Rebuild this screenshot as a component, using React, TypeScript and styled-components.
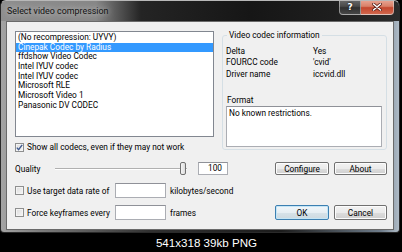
import { Fragment } from "react";
import styled, { createGlobalStyle } from "styled-components";

const GlobalStyle = createGlobalStyle`
    html, body {
        margin: 0;
        padding: 0;
        background: #000;
    }
    body {
        width: 402px;
        height: 252px;
        overflow: hidden;
        font-family: Roboto, "Noto Sans", sans-serif;
        font-size: 8.3px;
        color: #000;
    }
`

const Page = styled.div`
    width: 402px;
    height: 252px;
    display: flex;
    flex-direction: column;
`

const Window = styled.div`
    width: 400px;
    height: 233px;
    box-sizing: border-box;
    display: flex;
    flex-direction: column;
    border-radius: 6px 6px 4px 4px;
    border: 1px solid #2a2a2a;
    border-top-color: #b8b8b8;
    background: linear-gradient(to right, #a4a4a4 0, #7c7c7c 40px, #303030 150px, #1c1c1c 280px, #6e7c8a 380px, #b6c2cd 400px);
    overflow: hidden;
`

const TitleBar = styled.div`
    height: 20px;
    display: flex;
    align-items: flex-start;
    background: linear-gradient(to right, #8e8e8e 0, #878787 95px, #5a5a5a 115px, #242424 140px, #161616 250px, #1e1e1e 330px, #2c2c2c 400px);
`

const Title = styled.div`
    font-size: 8.9px;
    line-height: 20px;
    margin-left: 6px;
    color: #111;
    text-shadow: 0 0 6px rgba(235, 235, 235, 0.9);
`

const CaptionButtons = styled.div`
    margin-left: auto;
    margin-right: 5px;
    margin-top: -1px;
    display: flex;
`

const CaptionButton = styled.div<{ $close?: boolean }>`
    height: 15px;
    width: ${p => (p.$close ? "33px" : "22px")};
    box-sizing: border-box;
    display: flex;
    align-items: center;
    justify-content: center;
    border: 1px solid rgba(220, 220, 220, 0.55);
    border-top: none;
    border-left: ${p => (p.$close ? "none" : "1px solid rgba(220, 220, 220, 0.55)")};
    border-radius: ${p => (p.$close ? "0 0 4px 0" : "0 0 0 4px")};
    background: ${p => p.$close
        ? "linear-gradient(#e9a796 0%, #d98068 45%, #c4472e 55%, #d0664c 100%)"
        : "linear-gradient(#6a6a6a 0%, #4a4a4a 45%, #303030 55%, #474747 100%)"};
    color: #fff;
    font-family: "DejaVu Sans", sans-serif;
    font-weight: bold;
    font-size: 9px;
    text-shadow: 0 0 2px #000;
`

const Client = styled.div`
    flex: 1;
    margin: 0 5px 2px 5px;
    box-sizing: border-box;
    border: 1px solid #6a6a6a;
    background: #f0f0f0;
    padding: 9px 6px 0 8px;
    display: flex;
    flex-direction: column;
`

const Top = styled.div`
    display: flex;
    gap: 8px;
    height: 121px;
`

const LeftColumn = styled.div`
    width: 199px;
    display: flex;
    flex-direction: column;
`

const ListBox = styled.div`
    height: 108px;
    box-sizing: border-box;
    border: 1px solid #828790;
    background: #fff;
    padding-top: 1px;
`

const ListItem = styled.div<{ $selected?: boolean }>`
    height: 9.7px;
    line-height: 9.7px;
    padding-left: 2px;
    white-space: nowrap;
    background: ${p => (p.$selected ? "#3399ff" : "transparent")};
    color: ${p => (p.$selected ? "#fff" : "#000")};
`

const CheckRow = styled.label<{ $width?: number }>`
    display: flex;
    align-items: center;
    gap: 3px;
    width: ${p => (p.$width ? `${p.$width}px` : "auto")};
    white-space: nowrap;
`

const ShowAll = styled(CheckRow)`
    margin-top: 5px;
`

const Box = styled.span`
    width: 9px;
    height: 9px;
    box-sizing: border-box;
    border: 1px solid #8e8f8f;
    background: linear-gradient(135deg, #dcdcdc, #f6f6f6);
    box-shadow: inset 0 0 0 1px #f4f4f4;
    display: flex;
    align-items: center;
    justify-content: center;
    flex-shrink: 0;
`

const Group = styled.fieldset`
    margin: -2px 0 0 0;
    padding: 0 4px 2px 3px;
    width: 165px;
    height: 121px;
    box-sizing: border-box;
    border: 1px solid #d5dfe5;
    border-radius: 3px;
    min-inline-size: 0;
    display: flex;
    flex-direction: column;
`

const Legend = styled.legend`
    margin-left: 1px;
    padding: 0 2px;
    line-height: 12px;
`

const InfoGrid = styled.div`
    display: grid;
    grid-template-columns: 87px auto;
    grid-auto-rows: 11.5px;
    align-items: center;
    margin-top: 4px;
`

const FormatLabel = styled.div`
    margin-top: 15px;
    margin-left: 1px;
    line-height: 11px;
`

const FormatBox = styled.div`
    height: 42px;
    box-sizing: border-box;
    border: 1px solid #abadb3;
    border-top-color: #8f9198;
    background: #fff;
    padding: 1px 2px;
    line-height: 11px;
`

const Row = styled.div<{ $top: number }>`
    display: flex;
    align-items: center;
    margin-top: ${p => p.$top}px;
`

const Label = styled.div<{ $width: number }>`
    width: ${p => p.$width}px;
`

const Slider = styled.div`
    position: relative;
    width: 132px;
    height: 13px;
    margin-right: 11px;
    &::before {
        content: "";
        position: absolute;
        left: 0;
        right: 0;
        top: 6px;
        height: 1px;
        background: #b0b0b0;
        border-bottom: 1px solid #fff;
    }
`

const Thumb = styled.div`
    position: absolute;
    top: 0;
    width: 6px;
    height: 13px;
    box-sizing: border-box;
    border: 1px solid #707070;
    border-radius: 2px;
    background: linear-gradient(to right, #f4f4f4, #dcdcdc);
`

const TextBox = styled.div<{ $width: number; $height: number }>`
    width: ${p => p.$width}px;
    height: ${p => p.$height}px;
    box-sizing: border-box;
    border: 1px solid #abadb3;
    border-top-color: #8f9198;
    background: #fff;
    text-align: right;
    padding-right: 5px;
    line-height: ${p => p.$height - 2}px;
`

const Unit = styled.div`
    margin-left: 4px;
    white-space: nowrap;
`

const Buttons = styled.div`
    margin-left: auto;
    display: flex;
    gap: 5px;
`

const Button = styled.div<{ $width: number; $height: number; $default?: boolean }>`
    width: ${p => p.$width}px;
    height: ${p => p.$height}px;
    box-sizing: border-box;
    display: flex;
    align-items: center;
    justify-content: center;
    border: 1px solid ${p => (p.$default ? "#3c7fb1" : "#707070")};
    border-radius: 2px;
    box-shadow: inset 0 0 0 1px ${p => (p.$default ? "#c4e5f6" : "#fcfcfc")};
    background: ${p => p.$default
        ? "linear-gradient(#f0f6fa 0%, #e6eef3 50%, #d6e2e9 51%, #cdd9e0 100%)"
        : "linear-gradient(#f2f2f2 0%, #ebebeb 50%, #dddddd 51%, #cfcfcf 100%)"};
`

const Footer = styled.div`
    flex: 1;
    display: flex;
    align-items: center;
    justify-content: center;
    padding-left: 11px;
    color: #fff;
    font-family: "Liberation Sans", Arial, sans-serif;
    font-size: 11.6px;
`

const Check = () => (
    <svg width="7" height="7" viewBox="0 0 7 7">
        <path d="M0.8 3.6 L2.6 5.6 L6.2 0.8" fill="none" stroke="#3f5a8f" strokeWidth="1.4" />
    </svg>
)

const CloseGlyph = () => (
    <svg width="10" height="8" viewBox="0 0 10 8">
        <path d="M1.5 1 L8.5 7 M8.5 1 L1.5 7" stroke="#5a2018" strokeWidth="3" strokeLinecap="round" />
        <path d="M1.5 1 L8.5 7 M8.5 1 L1.5 7" stroke="#fff" strokeWidth="1.6" strokeLinecap="round" />
    </svg>
)

const codecs = [
    "(No recompression: UYVY)",
    "Cinepak Codec by Radius",
    "ffdshow Video Codec",
    "Intel IYUV codec",
    "Intel IYUV codec",
    "Microsoft RLE",
    "Microsoft Video 1",
    "Panasonic DV CODEC",
]

const info = [
    ["Delta", "Yes"],
    ["FOURCC code", "'cvid'"],
    ["Driver name", "iccvid.dll"],
]

export default function App() {
    const quality = 100
    return (
        <>
            <GlobalStyle />
            <Page>
                <Window>
                    <TitleBar>
                        <Title>Select video compression</Title>
                        <CaptionButtons>
                            <CaptionButton>?</CaptionButton>
                            <CaptionButton $close><CloseGlyph /></CaptionButton>
                        </CaptionButtons>
                    </TitleBar>
                    <Client>
                        <Top>
                            <LeftColumn>
                                <ListBox>
                                    {codecs.map((c, i) => (
                                        <ListItem key={i} $selected={i === 1}>{c}</ListItem>
                                    ))}
                                </ListBox>
                                <ShowAll>
                                    <Box><Check /></Box>
                                    Show all codecs, even if they may not work
                                </ShowAll>
                            </LeftColumn>
                            <Group>
                                <Legend>Video codec information</Legend>
                                <InfoGrid>
                                    {info.map(([k, v]) => (
                                        <Fragment key={k}>
                                            <div>{k}</div>
                                            <div>{v}</div>
                                        </Fragment>
                                    ))}
                                </InfoGrid>
                                <FormatLabel>Format</FormatLabel>
                                <FormatBox>No known restrictions.</FormatBox>
                            </Group>
                        </Top>
                        <Row $top={10}>
                            <Label $width={40}>Quality</Label>
                            <Slider>
                                <Thumb style={{ left: `${(quality / 100) * 125}px` }} />
                            </Slider>
                            <TextBox $width={30} $height={13}>{quality}</TextBox>
                            <Buttons>
                                <Button $width={54} $height={13}>Configure</Button>
                                <Button $width={53} $height={13}>About</Button>
                            </Buttons>
                        </Row>
                        <Row $top={8}>
                            <CheckRow $width={100}>
                                <Box />
                                Use target data rate of
                            </CheckRow>
                            <TextBox $width={51} $height={15} />
                            <Unit>kilobytes/second</Unit>
                        </Row>
                        <Row $top={7}>
                            <CheckRow $width={100}>
                                <Box />
                                Force keyframes every
                            </CheckRow>
                            <TextBox $width={51} $height={15} />
                            <Unit>frames</Unit>
                            <Buttons>
                                <Button $width={54} $height={15} $default>OK</Button>
                                <Button $width={53} $height={15}>Cancel</Button>
                            </Buttons>
                        </Row>
                    </Client>
                </Window>
                <Footer>541x318 39kb PNG</Footer>
            </Page>
        </>
    )
}
